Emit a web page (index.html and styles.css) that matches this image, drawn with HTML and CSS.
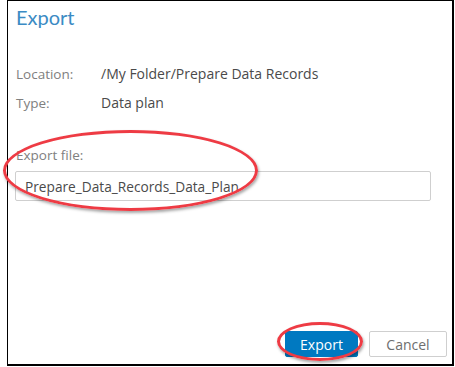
FILE: index.html
```html
<!DOCTYPE html>
<html lang="en">
<head>
    <meta charset="UTF-8">
    <title>Export</title>
    <link rel="stylesheet" href="styles.css">
</head>
<body>
    <div class="dialog">
        <h1 class="dialog-title">Export</h1>
        <div class="info">
            <div class="info-row">
                <span class="info-label">Location:</span>
                <span class="info-value">/My Folder/Prepare Data Records</span>
            </div>
            <div class="info-row">
                <span class="info-label">Type:</span>
                <span class="info-value">Data plan</span>
            </div>
        </div>
        <div class="field">
            <label for="exportFile">Export file:</label>
            <input type="text" id="exportFile" value="Prepare_Data_Records_Data_Plan">
            <div class="callout callout-field"></div>
        </div>
        <div class="actions">
            <div class="btn-wrap">
                <button class="btn btn-primary">Export</button>
                <div class="callout callout-btn"></div>
            </div>
            <button class="btn btn-default">Cancel</button>
        </div>
    </div>
</body>
</html>
```

FILE: styles.css
```css
body {
    margin: 0;
    background-color: #ffffff;
    font-family: 'Open Sans', 'Lato', sans-serif;
}
.dialog {
    margin-left: 7px;
    width: 447px;
    height: 366px;
    box-sizing: border-box;
    border-top: 1px solid #000;
    border-left: 1px solid #000;
    border-right: 2px solid #000;
    border-bottom: 2px solid #000;
    padding: 4px 5px 7px 8px;
    display: flex;
    flex-direction: column;
}
.dialog-title {
    margin: 0;
    font-family: 'Lato', sans-serif;
    font-size: 20px;
    line-height: 24px;
    font-weight: 400;
    color: #3b8bc4;
}
.info {
    margin-top: 35px;
    display: flex;
    flex-direction: column;
    gap: 9px;
}
.info-row {
    display: flex;
    font-size: 13.5px;
    line-height: 20px;
}
.info-label {
    width: 85px;
    color: #808080;
}
.info-value {
    font-size: 14px;
    color: #4a4a4a;
}
.field {
    position: relative;
    margin-top: 32px;
}
.field label {
    display: block;
    font-size: 13.5px;
    line-height: 20px;
    color: #808080;
    margin-bottom: 6px;
}
.field input {
    display: block;
    margin: 0 0 0 -1px;
    width: 416px;
    height: 30px;
    box-sizing: border-box;
    border: 1px solid #cfcfcf;
    border-radius: 2px;
    padding: 0 9px;
    font-family: inherit;
    font-size: 13.7px;
    color: #4a4a4a;
}
.actions {
    margin-top: auto;
    display: flex;
    justify-content: flex-end;
    gap: 11px;
}
.btn-wrap {
    position: relative;
}
.btn {
    height: 26px;
    box-sizing: border-box;
    border-radius: 2px;
    font-family: inherit;
    font-size: 14px;
    padding: 0;
}
.btn-primary {
    width: 73px;
    background-color: #0079c1;
    border: 1px solid #0079c1;
    color: #ffffff;
}
.btn-default {
    width: 78px;
    background-color: #ffffff;
    border: 1px solid #cfcfcf;
    color: #6e6e6e;
}
.callout {
    position: absolute;
    border: 3px solid #ee3b44;
    border-radius: 50%;
    box-shadow: 1px 2px 3px rgba(0, 0, 0, 0.35);
    pointer-events: none;
}
.callout-field {
    left: -13px;
    top: -15px;
    width: 249px;
    height: 75px;
}
.callout-btn {
    left: -8px;
    top: -9px;
    width: 80px;
    height: 33px;
}
```
